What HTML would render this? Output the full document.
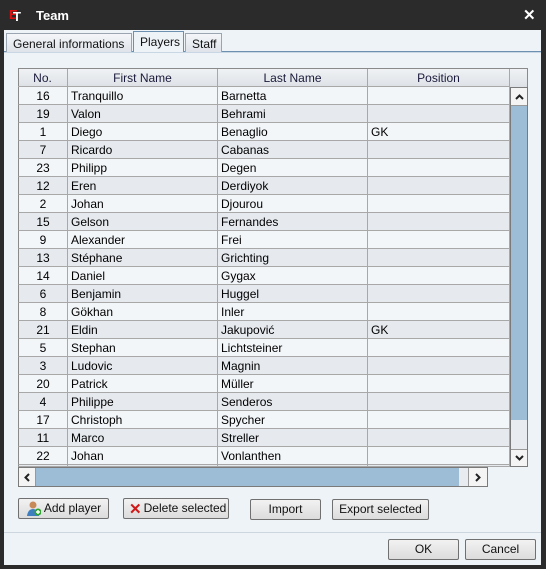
<!DOCTYPE html>
<html><head><style>
*{margin:0;padding:0;box-sizing:border-box}
body{width:546px;height:569px;background:#2b2b2b;font-family:"Liberation Sans",sans-serif;font-size:12px;color:#000;position:relative;overflow:hidden}
.abs{position:absolute}
#win{left:4px;top:30px;width:537px;height:535px;background:#eef3f8}
.tab{position:absolute;top:33px;height:19px;border:1px solid #9aa5b1;border-bottom:none;background:linear-gradient(#f4f6f8,#dfe4ea);padding:3px 6px 0;font-size:12px;color:#111}
.cell{position:absolute;height:18px;line-height:18px;border-right:1px solid #a8a8a8;border-bottom:1px solid #a8a8a8;white-space:nowrap;overflow:hidden;padding-left:3px}
.btn{position:absolute;height:21px;border:1px solid #707070;border-radius:2px;background:linear-gradient(#f2f2f2,#dcdcdc);text-align:center;line-height:19px;font-size:12px;color:#111}
.sb{position:absolute;background:#f4f4f4;display:flex;align-items:center;justify-content:center}
</style></head><body>
<div class="abs" style="left:9px;top:7px;color:#e01010;font-weight:bold;font-size:13px">E</div>
<div class="abs" style="left:13px;top:9px;color:#fff;font-weight:bold;font-size:13px">T</div>
<div class="abs" style="left:36px;top:8px;color:#fff;font-weight:bold;font-size:13px">Team</div>
<div class="abs" style="left:523px;top:6px;color:#fff;font-size:15px;font-weight:bold">✕</div>
<div id="win" class="abs"></div>
<div class="abs" style="left:4px;top:51px;width:537px;height:2px;border-top:1px solid #6d8fb0;border-bottom:1px solid #c9d6e3"></div>
<div class="tab" style="left:6px;width:126px">General informations</div>
<div class="tab" style="left:133px;width:51px;top:31px;height:21px;background:#eef3f8;border-color:#6d8fb0">Players</div>
<div class="tab" style="left:185px;width:37px">Staff</div>
<div class="abs" style="left:18px;top:68px;width:510px;height:20px;background:linear-gradient(#f0f2f4,#dde1e6);border:1px solid #8a8a8a"></div>
<div id="tbl"></div>
<div class="abs" style="left:510px;top:87px;width:18px;height:380px;background:#e8ecf0;border:1px solid #7a7a7a"></div>
<div class="sb" style="left:511px;top:88px;width:16px;height:18px;border-bottom:1px solid #999"><svg width="9" height="6"><path d="M1 5L4.5 1.5L8 5" stroke="#222" stroke-width="2" fill="none"/></svg></div>
<div class="abs" style="left:511px;top:106px;width:16px;height:314px;background:#9dbcd6"></div>
<div class="sb" style="left:511px;top:449px;width:16px;height:17px;border-top:1px solid #999"><svg width="9" height="6"><path d="M1 1L4.5 4.5L8 1" stroke="#222" stroke-width="2" fill="none"/></svg></div>
<div class="abs" style="left:18px;top:467px;width:470px;height:20px;background:#e8ecf0;border:1px solid #7a7a7a"></div>
<div class="sb" style="left:19px;top:468px;width:17px;height:18px;border-right:1px solid #999"><svg width="6" height="9"><path d="M5 1L1.5 4.5L5 8" stroke="#222" stroke-width="2" fill="none"/></svg></div>
<div class="abs" style="left:36px;top:468px;width:423px;height:18px;background:#9dbcd6"></div>
<div class="sb" style="left:468px;top:468px;width:19px;height:18px;border-left:1px solid #999"><svg width="6" height="9"><path d="M1 1L4.5 4.5L1 8" stroke="#222" stroke-width="2" fill="none"/></svg></div>
<div class="btn" style="left:18px;top:498px;width:91px;padding-left:18px">Add player</div>
<div class="abs" style="left:27px;top:501px;width:14px;height:15px"><svg width="14" height="15"><circle cx="6" cy="4" r="3.5" fill="#c98a5a"/><path d="M0 15 Q1 8 6 8 Q11 8 12 15Z" fill="#3f7fbf"/><circle cx="11" cy="11" r="3.5" fill="#2fa52f"/><path d="M9 11h4M11 9v4" stroke="#fff" stroke-width="1.4"/></svg></div>
<div class="btn" style="left:123px;top:498px;width:106px;padding-left:18px">Delete selected</div>
<div class="abs" style="left:129px;top:500px;color:#d01818;font-weight:bold;font-size:15px">✕</div>
<div class="btn" style="left:250px;top:499px;width:71px">Import</div>
<div class="btn" style="left:332px;top:499px;width:97px">Export selected</div>
<div class="abs" style="left:4px;top:532px;width:537px;height:1px;background:#cdd6df"></div>
<div class="btn" style="left:388px;top:539px;width:71px">OK</div>
<div class="btn" style="left:465px;top:539px;width:71px">Cancel</div>
<script>
var rows=[["16","Tranquillo","Barnetta",""],["19","Valon","Behrami",""],["1","Diego","Benaglio","GK"],["7","Ricardo","Cabanas",""],["23","Philipp","Degen",""],["12","Eren","Derdiyok",""],["2","Johan","Djourou",""],["15","Gelson","Fernandes",""],["9","Alexander","Frei",""],["13","Stéphane","Grichting",""],["14","Daniel","Gygax",""],["6","Benjamin","Huggel",""],["8","Gökhan","Inler",""],["21","Eldin","Jakupović","GK"],["5","Stephan","Lichtsteiner",""],["3","Ludovic","Magnin",""],["20","Patrick","Müller",""],["4","Philippe","Senderos",""],["17","Christoph","Spycher",""],["11","Marco","Streller",""],["22","Johan","Vonlanthen",""],["","","",""]];
var cols=[[18,50],[68,150],[218,150],[368,142]];var h="";
var hd=["No.","First Name","Last Name","Position"];
for(var c=0;c<4;c++)h+='<div class="cell" style="left:'+cols[c][0]+'px;top:69px;width:'+cols[c][1]+'px;text-align:center;padding:0;color:#1a1a3a">'+hd[c]+'</div>';
for(var r=0;r<rows.length;r++){var y=87+r*18;var hh=r==21?2:18;var bg=r%2?"#e6eaef":"#f3f6f9";
for(var c=0;c<4;c++){h+='<div class="cell" style="left:'+cols[c][0]+'px;top:'+y+'px;height:'+hh+'px;width:'+cols[c][1]+'px;background:'+bg+';'+(c==0?'text-align:center;padding:0;border-left:1px solid #8a8a8a':'')+'">'+rows[r][c]+'</div>';}}
document.getElementById("tbl").innerHTML=h;
</script>
</body></html>
